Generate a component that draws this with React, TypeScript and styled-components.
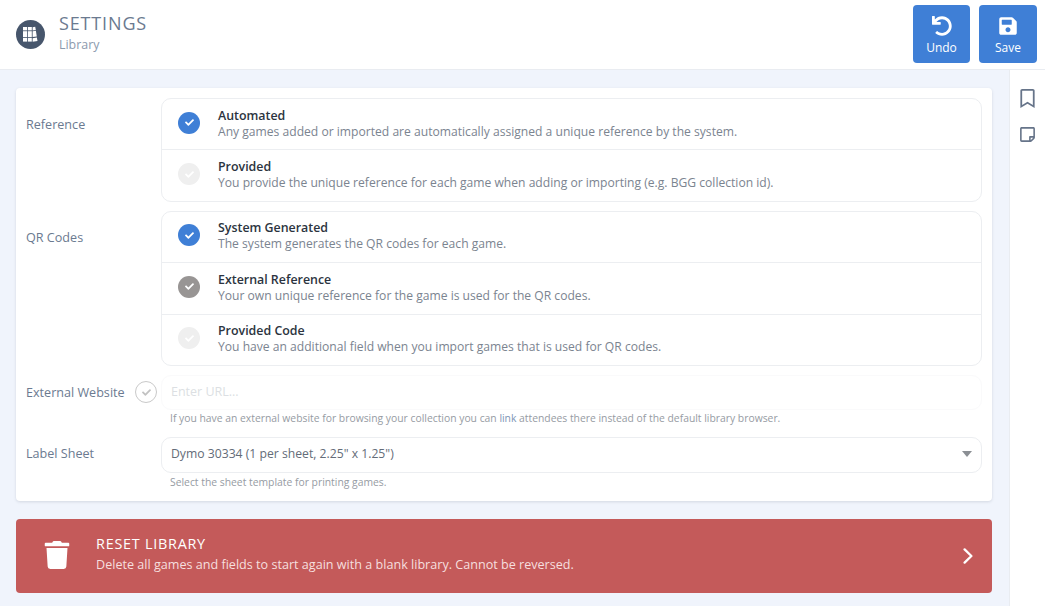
import React from 'react';
import styled, { createGlobalStyle } from 'styled-components';
import { FaCheck, FaRegBookmark, FaRegStickyNote, FaSave, FaTrash, FaUndo } from 'react-icons/fa';

const GlobalStyle = createGlobalStyle`
  html, body {
    margin: 0;
    padding: 0;
    height: 100%;
    overflow: hidden;
    background: #fff;
    font-family: "Open Sans", "Liberation Sans", sans-serif;
  }
`;

const Page = styled.div`
  width: 1045px;
  height: 606px;
  display: flex;
  flex-direction: column;
  overflow: hidden;
`;

const Header = styled.header`
  height: 69px;
  flex-shrink: 0;
  display: flex;
  align-items: center;
  justify-content: space-between;
  padding: 0 8px 0 16px;
  border-bottom: 1px solid #e9ecf1;
  box-sizing: content-box;
`;

const TitleGroup = styled.div`
  display: flex;
  align-items: center;
  gap: 14px;
`;

const Logo = styled.div`
  width: 29px;
  height: 29px;
  border-radius: 50%;
  background: #47566c;
  display: flex;
  align-items: center;
  justify-content: center;
`;

const TitleText = styled.div`
  display: flex;
  flex-direction: column;
  margin-top: -5px;
`;

const Title = styled.h1`
  margin: 0;
  font-size: 18px;
  line-height: 24px;
  font-weight: 400;
  letter-spacing: 0.85px;
  color: #6b7a90;
`;

const Subtitle = styled.div`
  font-size: 12.4px;
  line-height: 17px;
  margin-top: 1px;
  color: #8c9aae;
`;

const Actions = styled.div`
  display: flex;
  gap: 9px;
  margin-top: -1px;
`;

const ActionButton = styled.button<{ $wide?: boolean }>`
  width: ${props => (props.$wide ? 58 : 57)}px;
  height: 58px;
  border: none;
  border-radius: 4px;
  background: #3f7fd6;
  color: #fff;
  font-family: inherit;
  font-size: 12px;
  line-height: 16px;
  padding: 11px 0 0;
  display: flex;
  flex-direction: column;
  align-items: center;
  gap: 4px;
`;

const Body = styled.div`
  flex: 1;
  display: flex;
  min-height: 0;
`;

const Main = styled.main`
  width: 1009px;
  flex-shrink: 0;
  box-sizing: border-box;
  background: #f0f4fc;
  padding: 18px 17px 0 16px;
  display: flex;
  flex-direction: column;
  gap: 18px;
`;

const SideBar = styled.aside`
  flex: 1;
  border-left: 1px solid #e9ecf1;
  display: flex;
  flex-direction: column;
  align-items: center;
  gap: 18px;
  padding-top: 19px;
  color: #667489;
`;

const Card = styled.section`
  background: #fff;
  border-radius: 4px;
  box-shadow: 0 1px 3px rgba(60, 70, 90, 0.16);
  padding: 10px 10px 0 10px;
  height: 413px;
  box-sizing: border-box;
`;

const Field = styled.div<{ $gap?: number }>`
  display: flex;
  margin-bottom: ${props => props.$gap ?? 9}px;
`;

const FieldLabel = styled.div`
  width: 135px;
  flex-shrink: 0;
  padding-top: 18px;
  font-size: 12.6px;
  line-height: 17px;
  color: #6b7a90;
`;

const SheetField = styled.div`
  display: flex;
  margin-top: 11px;
`;

const SheetLabel = styled.div`
  width: 135px;
  flex-shrink: 0;
  align-self: center;
  padding-bottom: 2px;
  font-size: 12.6px;
  line-height: 17px;
  color: #6b7a90;
`;

const OptionList = styled.div`
  flex: 1;
  border: 1px solid #eceef1;
  border-radius: 10px;
  overflow: hidden;
`;

const OptionRow = styled.div`
  height: 50.4px;
  display: flex;
  align-items: center;
  padding-left: 16px;
  gap: 18px;
  box-sizing: content-box;

  & + & {
    border-top: 1px solid #eceef1;
  }
`;

const CheckDot = styled.span<{ $color: string; $tick: string }>`
  width: 22px;
  height: 22px;
  margin-top: -3px;
  border-radius: 50%;
  flex-shrink: 0;
  background: ${props => props.$color};
  color: ${props => props.$tick};
  display: flex;
  align-items: center;
  justify-content: center;
`;

const OptionText = styled.div`
  display: flex;
  flex-direction: column;
  margin-top: -1px;
`;

const OptionTitle = styled.div`
  font-size: 12.4px;
  line-height: 16px;
  font-weight: 600;
  color: #2c3440;
`;

const OptionDescription = styled.div`
  font-size: 12.12px;
  line-height: 16px;
  color: #7b8490;
`;

const UrlLabelCell = styled.div`
  width: 135px;
  flex-shrink: 0;
  display: flex;
  align-items: center;
  justify-content: space-between;
  padding-right: 4px;
  box-sizing: border-box;
`;

const InlineLabel = styled.span`
  font-size: 12.6px;
  color: #6b7a90;
`;

const EmptyCheck = styled.span`
  width: 20px;
  height: 20px;
  border: 1px solid #c9c9c9;
  border-radius: 50%;
  color: #c2c2c2;
  display: flex;
  align-items: center;
  justify-content: center;
`;

const UrlInput = styled.div`
  flex: 1;
  height: 35px;
  box-sizing: border-box;
  border: 1px solid #fafafb;
  border-radius: 10px;
  padding: 0 0 2px 9px;
  display: flex;
  align-items: center;
  font-size: 12.5px;
  color: #dcdfe3;
`;

const HelpText = styled.div<{ $top: number }>`
  margin: ${props => props.$top}px 0 0 135px;
  padding-left: 9px;
  font-size: 10.35px;
  line-height: 15px;
  color: #969ba3;
`;

const HelpLink = styled.span`
  color: #7d94b4;
`;

const SelectBox = styled.div`
  flex: 1;
  height: 36px;
  box-sizing: border-box;
  border: 1px solid #eceef1;
  border-radius: 10px;
  padding: 0 9px 2px;
  display: flex;
  align-items: center;
  justify-content: space-between;
  font-size: 12.2px;
  color: #646c78;
`;

const Caret = styled.span`
  width: 0;
  height: 0;
  border-left: 5px solid transparent;
  border-right: 5px solid transparent;
  border-top: 6px solid #8b8f94;
`;

const DangerBanner = styled.section`
  height: 74px;
  border-radius: 4px;
  background: #c45a5a;
  color: #fff;
  display: flex;
  align-items: center;
  padding: 0 19px 0 27px;
`;

const DangerIcon = styled.div`
  width: 53px;
  margin-top: -3px;
  display: flex;
`;

const DangerText = styled.div`
  flex: 1;
  padding-bottom: 4px;
`;

const DangerTitle = styled.div`
  font-size: 14.4px;
  line-height: 20px;
  letter-spacing: 0.75px;
`;

const DangerDescription = styled.div`
  margin-top: 2px;
  font-size: 12.6px;
  line-height: 18px;
  color: #f6dfdf;
`;

const LibraryMark = () => (
  <svg width="17" height="17" viewBox="0 0 17 17" fill="#fff" aria-hidden="true">
    <rect x="1" y="1" width="4" height="3.4" />
    <rect x="1" y="5.2" width="4" height="6" />
    <rect x="1" y="12" width="4" height="3.6" />
    <rect x="5.8" y="1" width="4" height="3.4" />
    <rect x="5.8" y="5.2" width="4" height="6" />
    <rect x="5.8" y="12" width="4" height="3.6" />
    <path d="M10.6 1.2l2.6-.4.6 3.2-3.2.5z" />
    <path d="M10.6 5.3l3.3-.5.9 5.6-4.2.7z" />
    <path d="M10.6 12.3l4.3-.8.6 3.4-4.9.8z" />
  </svg>
);

const ChevronMark = () => (
  <svg width="10" height="16" viewBox="0 0 10 16" fill="none" stroke="#fff" strokeWidth="2.3" strokeLinecap="round" strokeLinejoin="round" aria-hidden="true">
    <path d="M1.6 1.4L8.4 8 1.6 14.6" />
  </svg>
);

const groups = {
  reference: [
    { title: 'Automated', text: 'Any games added or imported are automatically assigned a unique reference by the system.', state: 'on' },
    { title: 'Provided', text: 'You provide the unique reference for each game when adding or importing (e.g. BGG collection id).', state: 'off' },
  ],
  qr: [
    { title: 'System Generated', text: 'The system generates the QR codes for each game.', state: 'on' },
    { title: 'External Reference', text: 'Your own unique reference for the game is used for the QR codes.', state: 'mid' },
    { title: 'Provided Code', text: 'You have an additional field when you import games that is used for QR codes.', state: 'off' },
  ],
};

const dotColors: Record<string, [string, string]> = {
  on: ['#3f7fd6', '#fff'],
  mid: ['#989594', '#fff'],
  off: ['#efefef', '#fff'],
};

const OptionGroup = ({ items }: { items: { title: string; text: string; state: string }[] }) => (
  <OptionList>
    {items.map(item => (
      <OptionRow key={item.title}>
        <CheckDot $color={dotColors[item.state][0]} $tick={dotColors[item.state][1]}>
          <FaCheck size={9} />
        </CheckDot>
        <OptionText>
          <OptionTitle>{item.title}</OptionTitle>
          <OptionDescription>{item.text}</OptionDescription>
        </OptionText>
      </OptionRow>
    ))}
  </OptionList>
);

const App = () => (
  <Page>
    <GlobalStyle />
    <Header>
      <TitleGroup>
        <Logo>
          <LibraryMark />
        </Logo>
        <TitleText>
          <Title>SETTINGS</Title>
          <Subtitle>Library</Subtitle>
        </TitleText>
      </TitleGroup>
      <Actions>
        <ActionButton>
          <FaUndo size={20} />
          Undo
        </ActionButton>
        <ActionButton $wide>
          <FaSave size={20} />
          Save
        </ActionButton>
      </Actions>
    </Header>
    <Body>
      <Main>
        <Card>
          <Field>
            <FieldLabel>Reference</FieldLabel>
            <OptionGroup items={groups.reference} />
          </Field>
          <Field>
            <FieldLabel>QR Codes</FieldLabel>
            <OptionGroup items={groups.qr} />
          </Field>
          <Field $gap={0}>
            <UrlLabelCell>
              <InlineLabel>External Website</InlineLabel>
              <EmptyCheck>
                <FaCheck size={9} />
              </EmptyCheck>
            </UrlLabelCell>
            <UrlInput>Enter URL...</UrlInput>
          </Field>
          <HelpText $top={1}>
            If you have an external website for browsing your collection you can <HelpLink>link</HelpLink> attendees there instead of the default library browser.
          </HelpText>
          <SheetField>
            <SheetLabel>Label Sheet</SheetLabel>
            <SelectBox>
              Dymo 30334 (1 per sheet, 2.25" x 1.25")
              <Caret />
            </SelectBox>
          </SheetField>
          <HelpText $top={2}>Select the sheet template for printing games.</HelpText>
        </Card>
        <DangerBanner>
          <DangerIcon>
            <FaTrash size={28} />
          </DangerIcon>
          <DangerText>
            <DangerTitle>RESET LIBRARY</DangerTitle>
            <DangerDescription>Delete all games and fields to start again with a blank library. Cannot be reversed.</DangerDescription>
          </DangerText>
          <ChevronMark />
        </DangerBanner>
      </Main>
      <SideBar>
        <FaRegBookmark size={19} />
        <FaRegStickyNote size={17} />
      </SideBar>
    </Body>
  </Page>
);

export default App;
